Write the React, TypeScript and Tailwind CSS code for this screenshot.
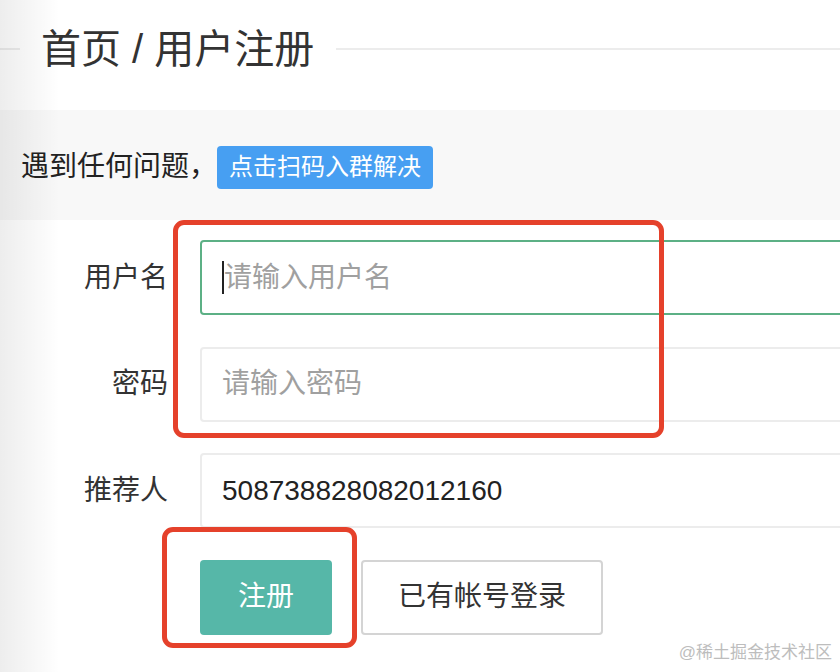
import React from "react";

const cjk = { fontFamily: '"Liberation Sans", "Noto Sans CJK SC", sans-serif' };

function Field({
  label,
  placeholder,
  value,
  focused,
}: {
  label: string;
  placeholder?: string;
  value?: string;
  focused?: boolean;
}) {
  return (
    <div className="flex items-center">
      <div className="w-[168px] shrink-0 text-right text-[28px] leading-none text-[#333]">{label}</div>
      <div
        className={
          "ml-[32px] flex h-[75px] w-[700px] shrink-0 items-center rounded-[4px] bg-white pl-[20px] text-[28px] " +
          (focused ? "border-2 border-[#5cb085]" : "border-2 border-[#ececec]")
        }
      >
        {focused && <span className="h-[33px] w-[2px] bg-[#222]" />}
        {value ? (
          <span className="text-[#222]">{value}</span>
        ) : (
          <span className="text-[#a0a0a0]">{placeholder}</span>
        )}
      </div>
    </div>
  );
}

export default function App() {
  return (
    <div className="relative h-[672px] w-[840px] overflow-hidden bg-white" style={cjk}>
      {/* header */}
      <div className="flex h-[98px] items-center">
        <div className="h-[2px] w-[20px] shrink-0 bg-[#ececec]" />
        <div className="ml-[21px] shrink-0 text-[40px] leading-none text-[#333]">首页 / 用户注册</div>
        <div className="ml-[22px] h-[2px] flex-1 bg-[#ececec]" />
      </div>

      {/* notice band */}
      <div className="mt-[12px] flex h-[110px] items-center bg-[#f8f8f8] pl-[21px] pt-[4px]">
        <span className="text-[28px] leading-none text-[#222]">遇到任何问题，</span>
        <span className="flex h-[43px] items-center rounded-[4px] bg-[#479ff2] px-[12px] text-[24px] leading-none text-white">
          点击扫码入群解决
        </span>
      </div>

      {/* form */}
      <div className="flex flex-col gap-[31.5px] pt-[20px]">
        <Field label="用户名" placeholder="请输入用户名" focused />
        <Field label="密码" placeholder="请输入密码" />
        <Field label="推荐人" value="508738828082012160" />
        <div className="flex items-center pl-[200px]">
          <div className="flex h-[75px] w-[132px] shrink-0 items-center justify-center rounded-[4px] bg-[#56b7a8] text-[28px] text-white">
            注册
          </div>
          <div className="ml-[29px] flex h-[75px] w-[242px] shrink-0 items-center justify-center rounded-[4px] border-2 border-[#d4d4d4] bg-white text-[28px] text-[#333]">
            已有帐号登录
          </div>
        </div>
      </div>

      {/* left shade */}
      <div className="pointer-events-none absolute inset-y-0 left-0 w-[60px] bg-linear-to-r from-[rgba(0,0,0,0.07)] to-transparent" />

      {/* red annotation boxes */}
      <div className="pointer-events-none absolute left-[173px] top-[220px] h-[218px] w-[491px] rounded-[11px] border-[5px] border-[#e5412b]" />
      <div className="pointer-events-none absolute left-[162px] top-[527px] h-[121px] w-[195px] rounded-[11px] border-[5px] border-[#e5412b]" />

      {/* watermark */}
      <div className="absolute right-[8px] top-[644px] text-[17px] leading-none text-[#bdbdbd]">@稀土掘金技术社区</div>
    </div>
  );
}
